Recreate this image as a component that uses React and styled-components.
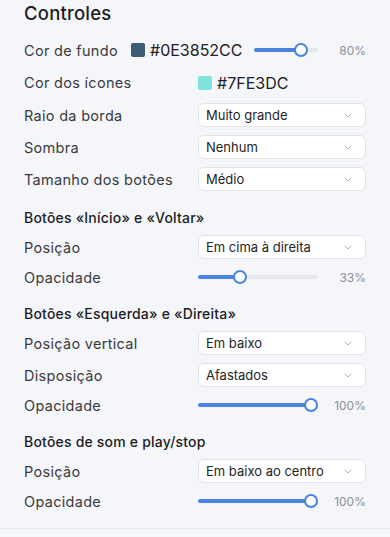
import React from "react";
import styled, { createGlobalStyle } from "styled-components";

const Global = createGlobalStyle`
  html, body { margin: 0; padding: 0; background: #f4f6f9; }
  body { font-family: Inter, "Noto Sans", sans-serif; -webkit-font-smoothing: antialiased; }
`;

const Panel = styled.div`
  width: 390px;
  box-sizing: border-box;
  padding: 0 24px 13px 24px;
  border-bottom: 1px solid #e3e6ea;
  display: flex;
  flex-direction: column;
`;

const Title = styled.h2`
  margin: 0 0 8px 0;
  font-size: 18.5px;
  line-height: 26px;
  font-weight: 500;
  letter-spacing: 0.2px;
  color: #1c1d1f;
`;

const Section = styled.div`
  display: flex;
  flex-direction: column;
  margin-top: 8px;
`;

const SectionTitle = styled.h3`
  margin: 0;
  height: 28px;
  display: flex;
  align-items: center;
  font-size: 14px;
  font-weight: 500;
  letter-spacing: 0.2px;
  color: #1c1d1f;
`;

const Row = styled.div`
  display: flex;
  align-items: center;
  height: ${(p) => p.$h || 32}px;
`;

const Label = styled.div`
  width: ${(p) => p.$w || 174}px;
  flex: none;
  font-size: 14.5px;
  letter-spacing: 0.3px;
  color: #3a3b3e;
  white-space: nowrap;
`;

const Control = styled.div`
  flex: 1;
  display: flex;
  align-items: center;
  min-width: 0;
`;

const Swatch = styled.span`
  width: 14px;
  height: 14px;
  border-radius: 2px;
  background: ${(p) => p.$color};
  flex: none;
`;

const Hex = styled.span`
  margin-left: 5px;
  font-size: 16px;
  color: #1f2022;
`;

const SelectBox = styled.div`
  width: 100%;
  height: 24px;
  box-sizing: border-box;
  background: #fff;
  border: 1px solid #e1e4e8;
  border-radius: 6px;
  display: flex;
  align-items: center;
  justify-content: space-between;
  padding: 0 13px 0 7px;
  font-size: 13px;
  color: #232426;
`;

const Chevron = () => (
  <svg width="8" height="5" viewBox="0 0 8 5" fill="none">
    <path d="M1 1l3 3 3-3" stroke="#b3b7bd" strokeWidth="1" strokeLinecap="round" strokeLinejoin="round" />
  </svg>
);

const Select = ({ value }) => (
  <SelectBox>
    <span>{value}</span>
    <Chevron />
  </SelectBox>
);

const Track = styled.div`
  position: relative;
  width: ${(p) => p.$w}px;
  margin-left: ${(p) => p.$ml || 0}px;
  height: 4px;
  border-radius: 2px;
  background: #e7e9ed;
  flex: none;
`;

const Fill = styled.div`
  height: 100%;
  border-radius: 2px;
  background: #4a84e0;
`;

const Thumb = styled.div`
  position: absolute;
  top: 50%;
  width: 14px;
  height: 14px;
  box-sizing: border-box;
  border-radius: 50%;
  background: #fff;
  border: 2px solid #4a84e0;
  transform: translate(-50%, -50%);
`;

const Value = styled.span`
  margin-left: auto;
  font-size: 12px;
  color: #8c9097;
`;

const Slider = ({ pct, width, ml }) => {
  const pos = 7 + ((width - 14) * pct) / 100;
  return (
    <>
      <Track $w={width} $ml={ml}>
        <Fill style={{ width: `${pos}px` }} />
        <Thumb style={{ left: `${pos}px` }} />
      </Track>
      <Value>{pct}%</Value>
    </>
  );
};

export default function App() {
  return (
    <>
      <Global />
      <Panel>
        <Title>Controles</Title>
        <Row>
          <Label $w={107}>Cor de fundo</Label>
          <Control>
            <Swatch $color="rgba(14,56,82,0.8)" />
            <Hex>#0E3852CC</Hex>
            <Slider pct={80} width={64} ml={12} />
          </Control>
        </Row>
        <Row $h={33}>
          <Label>Cor dos ícones</Label>
          <Control>
            <Swatch $color="#7FE3DC" />
            <Hex>#7FE3DC</Hex>
          </Control>
        </Row>
        <Row>
          <Label>Raio da borda</Label>
          <Control><Select value="Muito grande" /></Control>
        </Row>
        <Row>
          <Label>Sombra</Label>
          <Control><Select value="Nenhum" /></Control>
        </Row>
        <Row>
          <Label>Tamanho dos botões</Label>
          <Control><Select value="Médio" /></Control>
        </Row>

        <Section>
          <SectionTitle>Botões «Início» e «Voltar»</SectionTitle>
          <Row>
            <Label>Posição</Label>
            <Control><Select value="Em cima à direita" /></Control>
          </Row>
          <Row $h={28}>
            <Label>Opacidade</Label>
            <Control><Slider pct={33} width={120} /></Control>
          </Row>
        </Section>

        <Section>
          <SectionTitle>Botões «Esquerda» e «Direita»</SectionTitle>
          <Row>
            <Label>Posição vertical</Label>
            <Control><Select value="Em baixo" /></Control>
          </Row>
          <Row>
            <Label>Disposição</Label>
            <Control><Select value="Afastados" /></Control>
          </Row>
          <Row $h={28}>
            <Label>Opacidade</Label>
            <Control><Slider pct={100} width={120} /></Control>
          </Row>
        </Section>

        <Section>
          <SectionTitle>Botões de som e play/stop</SectionTitle>
          <Row>
            <Label>Posição</Label>
            <Control><Select value="Em baixo ao centro" /></Control>
          </Row>
          <Row $h={28}>
            <Label>Opacidade</Label>
            <Control><Slider pct={100} width={120} /></Control>
          </Row>
        </Section>
      </Panel>
    </>
  );
}
